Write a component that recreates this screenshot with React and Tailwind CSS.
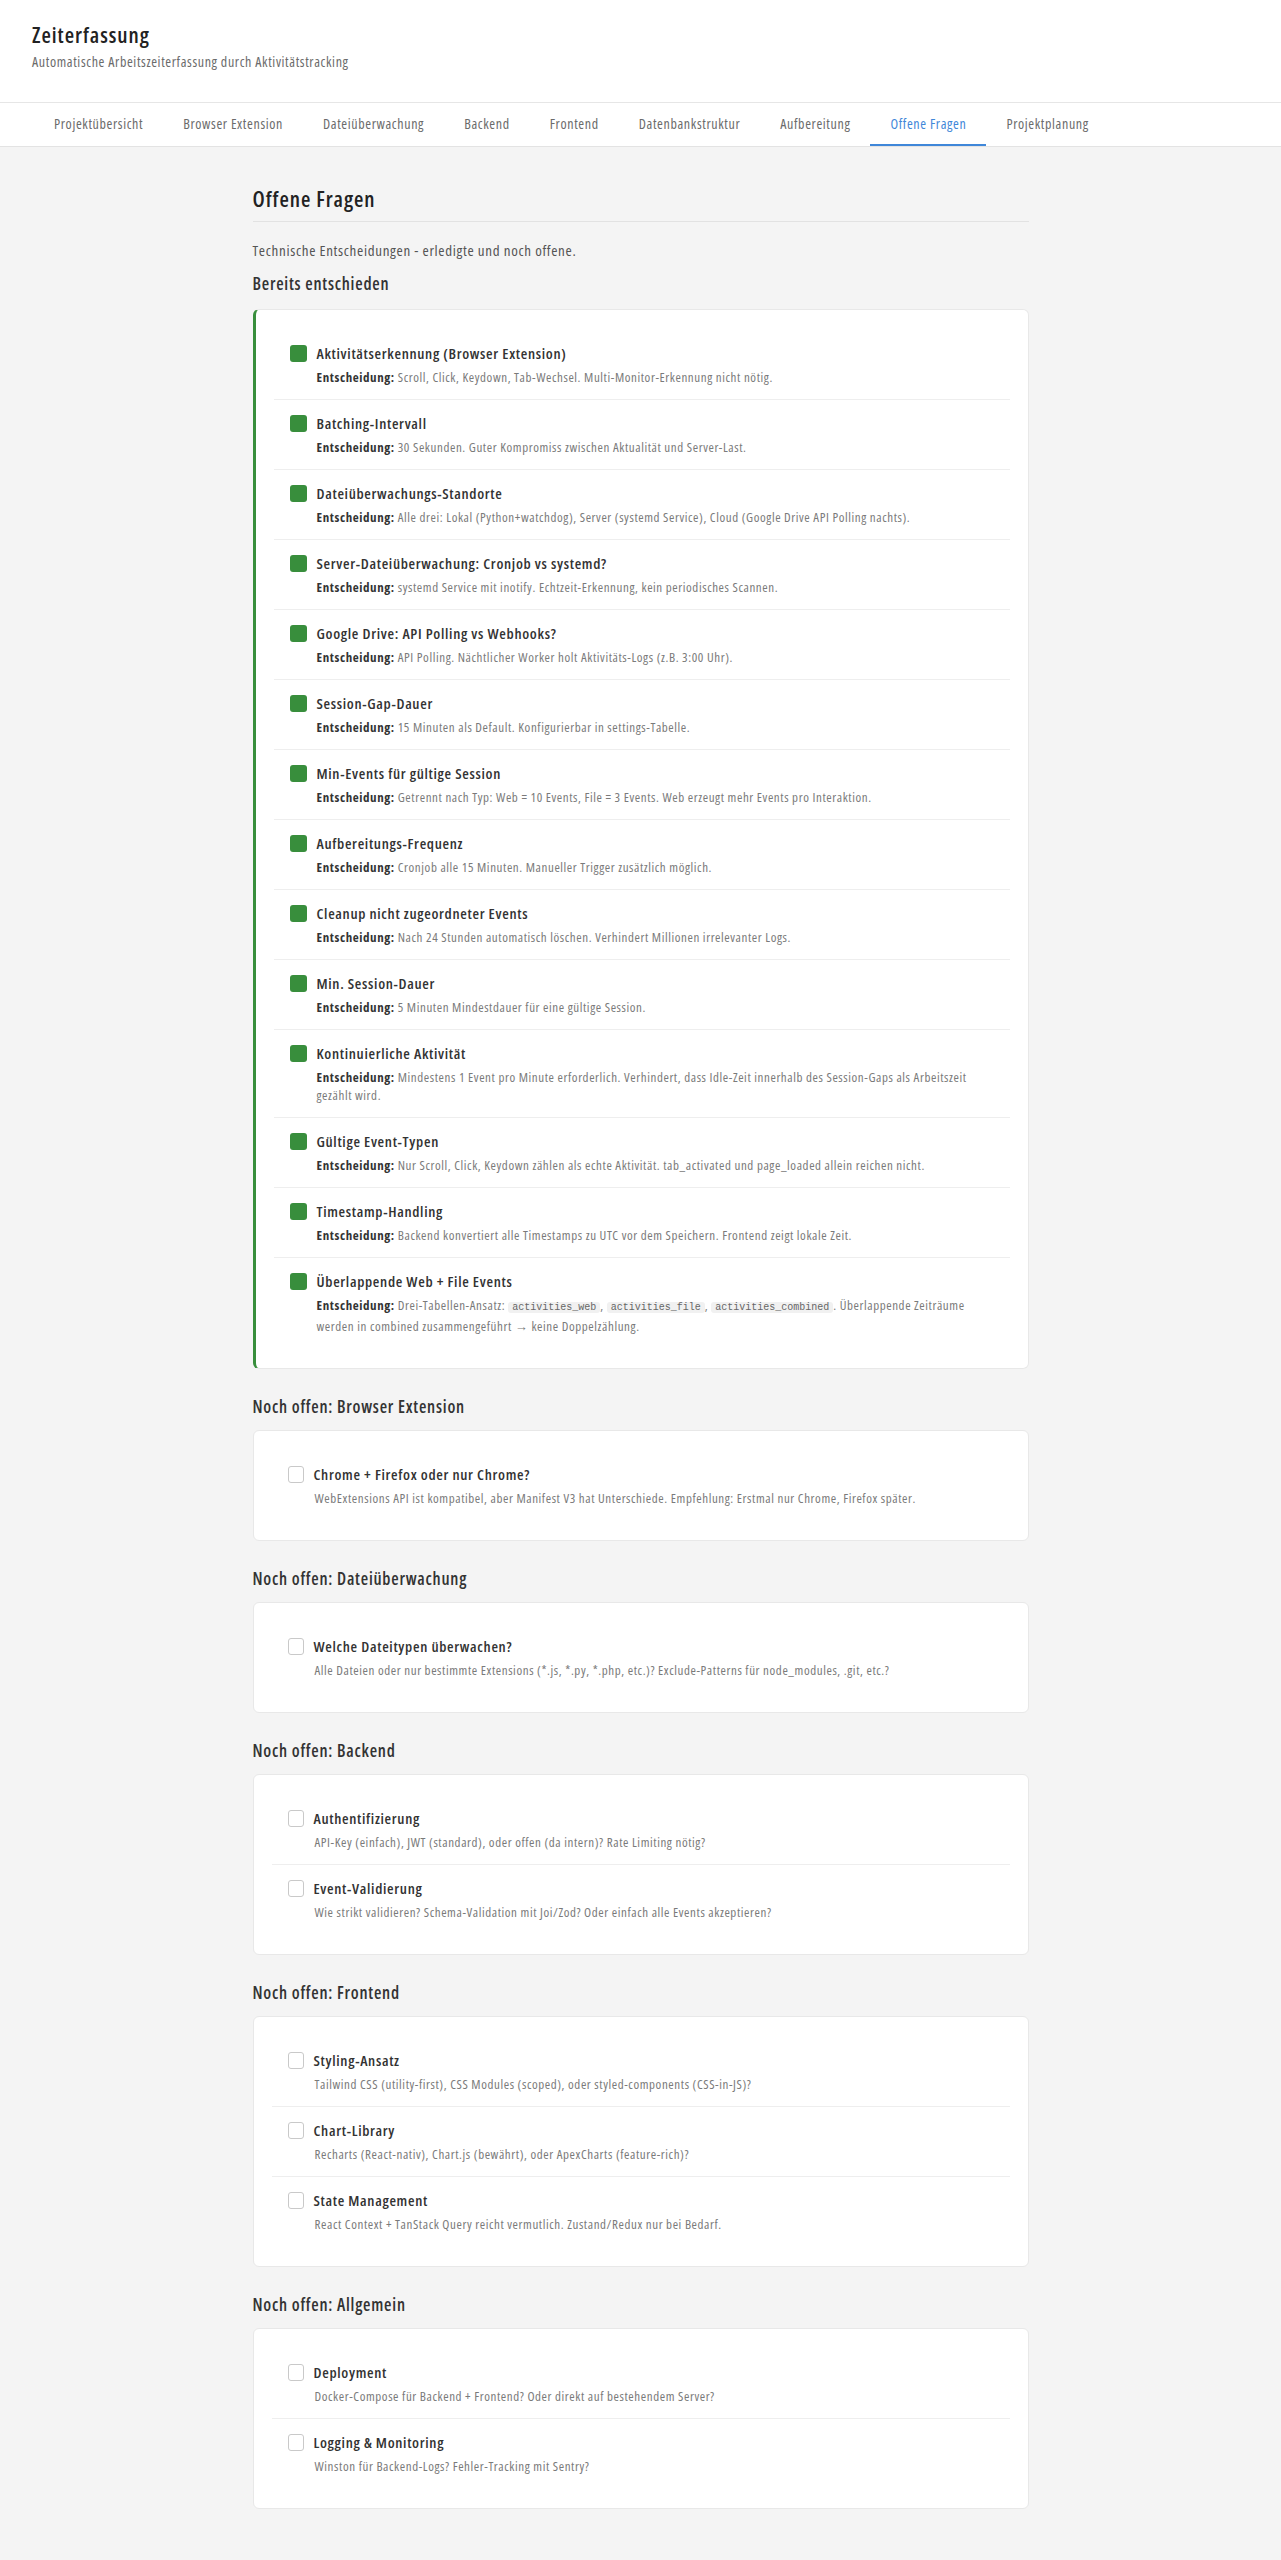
const tabs = [
  'Projektübersicht',
  'Browser Extension',
  'Dateiüberwachung',
  'Backend',
  'Frontend',
  'Datenbankstruktur',
  'Aufbereitung',
  'Offene Fragen',
  'Projektplanung',
];

const Code = ({ children }) => (
  <code className="bg-[#f1f1f1] text-[#666] rounded-[3px] px-[4px] py-0 text-[10px] tracking-normal font-['Liberation_Mono',monospace]">
    {children}
  </code>
);

const decided = [
  { title: 'Aktivitätserkennung (Browser Extension)', text: 'Scroll, Click, Keydown, Tab-Wechsel. Multi-Monitor-Erkennung nicht nötig.' },
  { title: 'Batching-Intervall', text: '30 Sekunden. Guter Kompromiss zwischen Aktualität und Server-Last.' },
  { title: 'Dateiüberwachungs-Standorte', text: 'Alle drei: Lokal (Python+watchdog), Server (systemd Service), Cloud (Google Drive API Polling nachts).' },
  { title: 'Server-Dateiüberwachung: Cronjob vs systemd?', text: 'systemd Service mit inotify. Echtzeit-Erkennung, kein periodisches Scannen.' },
  { title: 'Google Drive: API Polling vs Webhooks?', text: 'API Polling. Nächtlicher Worker holt Aktivitäts-Logs (z.B. 3:00 Uhr).' },
  { title: 'Session-Gap-Dauer', text: '15 Minuten als Default. Konfigurierbar in settings-Tabelle.' },
  { title: 'Min-Events für gültige Session', text: 'Getrennt nach Typ: Web = 10 Events, File = 3 Events. Web erzeugt mehr Events pro Interaktion.' },
  { title: 'Aufbereitungs-Frequenz', text: 'Cronjob alle 15 Minuten. Manueller Trigger zusätzlich möglich.' },
  { title: 'Cleanup nicht zugeordneter Events', text: 'Nach 24 Stunden automatisch löschen. Verhindert Millionen irrelevanter Logs.' },
  { title: 'Min. Session-Dauer', text: '5 Minuten Mindestdauer für eine gültige Session.' },
  { title: 'Kontinuierliche Aktivität', text: 'Mindestens 1 Event pro Minute erforderlich. Verhindert, dass Idle-Zeit innerhalb des Session-Gaps als Arbeitszeit gezählt wird.' },
  { title: 'Gültige Event-Typen', text: 'Nur Scroll, Click, Keydown zählen als echte Aktivität. tab_activated und page_loaded allein reichen nicht.' },
  { title: 'Timestamp-Handling', text: 'Backend konvertiert alle Timestamps zu UTC vor dem Speichern. Frontend zeigt lokale Zeit.' },
  {
    title: 'Überlappende Web + File Events',
    text: (
      <>
        Drei-Tabellen-Ansatz: <Code>activities_web</Code>, <Code>activities_file</Code>, <Code>activities_combined</Code>. Überlappende Zeiträume werden in combined zusammengeführt → keine Doppelzählung.
      </>
    ),
  },
];

const openSections = [
  {
    heading: 'Noch offen: Browser Extension',
    items: [
      { title: 'Chrome + Firefox oder nur Chrome?', text: 'WebExtensions API ist kompatibel, aber Manifest V3 hat Unterschiede. Empfehlung: Erstmal nur Chrome, Firefox später.' },
    ],
  },
  {
    heading: 'Noch offen: Dateiüberwachung',
    items: [
      { title: 'Welche Dateitypen überwachen?', text: 'Alle Dateien oder nur bestimmte Extensions (*.js, *.py, *.php, etc.)? Exclude-Patterns für node_modules, .git, etc.?' },
    ],
  },
  {
    heading: 'Noch offen: Backend',
    items: [
      { title: 'Authentifizierung', text: 'API-Key (einfach), JWT (standard), oder offen (da intern)? Rate Limiting nötig?' },
      { title: 'Event-Validierung', text: 'Wie strikt validieren? Schema-Validation mit Joi/Zod? Oder einfach alle Events akzeptieren?' },
    ],
  },
  {
    heading: 'Noch offen: Frontend',
    items: [
      { title: 'Styling-Ansatz', text: 'Tailwind CSS (utility-first), CSS Modules (scoped), oder styled-components (CSS-in-JS)?' },
      { title: 'Chart-Library', text: 'Recharts (React-nativ), Chart.js (bewährt), oder ApexCharts (feature-rich)?' },
      { title: 'State Management', text: 'React Context + TanStack Query reicht vermutlich. Zustand/Redux nur bei Bedarf.' },
    ],
  },
  {
    heading: 'Noch offen: Allgemein',
    items: [
      { title: 'Deployment', text: 'Docker-Compose für Backend + Frontend? Oder direkt auf bestehendem Server?' },
      { title: 'Logging & Monitoring', text: 'Winston für Backend-Logs? Fehler-Tracking mit Sentry?' },
    ],
  },
];

function Item({ item, done }) {
  return (
    <div className="px-4 pt-[13px] pb-[13px] border-b border-[#eeeeee] last:border-b-0">
      <div className="flex items-start gap-[10px]">
        {done ? (
          <span className="mt-[2px] w-[17px] h-[17px] shrink-0 rounded-[3px] bg-[#388e3c]" />
        ) : (
          <span className="mt-[2px] w-4 h-[17px] shrink-0 rounded-[3px] border border-[#c9c9c9] bg-white" />
        )}
        <div className="text-[15px] leading-5 tracking-[0.045em] font-semibold text-[#333]">{item.title}</div>
      </div>
      <p className="pl-[27px] mt-[5px] text-[13px] leading-[18px] tracking-[0.045em] text-[#7a7a7a]">
        {done && <strong className="font-bold text-[#333]">Entscheidung: </strong>}
        {item.text}
      </p>
    </div>
  );
}

export default function App() {
  return (
    <div className="min-h-screen bg-[#f4f4f4] font-['Open_Sans',sans-serif] [font-stretch:condensed] text-[#333]">
      <header className="bg-white border-b border-[#e6e6e6] px-8 pt-[21px] pb-[31px]">
        <h1 className="text-[21.5px] leading-[28px] tracking-[0.045em] font-semibold text-[#222]">Zeiterfassung</h1>
        <p className="mt-[4px] text-[14px] leading-[18px] tracking-[0.045em] text-[#6b6b6b]">Automatische Arbeitszeiterfassung durch Aktivitätstracking</p>
      </header>

      <nav className="bg-white border-b border-[#e3e3e3] px-[34px] flex">
        {tabs.map((t) => (
          <div
            key={t}
            className={`h-[43px] px-5 flex items-center text-[14px] tracking-[0.045em] border-b-2 ${
              t === 'Offene Fragen' ? 'border-[#3f87d9] text-[#3f87d9]' : 'border-transparent text-[#6b6b6b]'
            }`}
          >
            {t}
          </div>
        ))}
      </nav>

      <main className="w-[776px] mx-auto pt-[38px] pb-[50px]">
        <h2 className="text-[21.5px] leading-[28px] tracking-[0.045em] font-semibold text-[#222] pb-[8px] border-b border-[#e2e2e2]">Offene Fragen</h2>
        <p className="mt-[17px] text-[15px] leading-[22px] tracking-[0.045em] text-[#555]">Technische Entscheidungen - erledigte und noch offene.</p>

        <h3 className="mt-[11px] text-[17px] leading-6 tracking-[0.045em] font-semibold text-[#333]">Bereits entschieden</h3>
        <div className="mt-[13px] bg-white rounded-md border border-[#e8e8e8] border-l-[3px] border-l-[#388e3c] py-5 px-[18px]">
          {decided.map((it) => (
            <Item key={it.title} item={it} done />
          ))}
        </div>

        {openSections.map((s) => (
          <section key={s.heading}>
            <h3 className="mt-[26px] mb-[11px] text-[17px] leading-6 tracking-[0.045em] font-semibold text-[#333]">{s.heading}</h3>
            <div className="bg-white rounded-md border border-[#e8e8e8] py-5 px-[18px]">
              {s.items.map((it) => (
                <Item key={it.title} item={it} />
              ))}
            </div>
          </section>
        ))}
      </main>
    </div>
  );
}
